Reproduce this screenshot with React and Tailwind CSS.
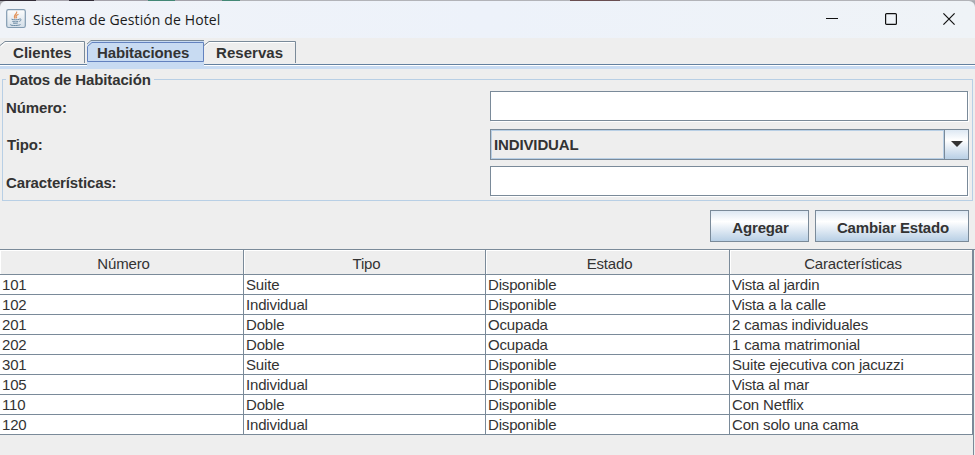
const rows = [
  ['101', 'Suite', 'Disponible', 'Vista al jardin'],
  ['102', 'Individual', 'Disponible', 'Vista a la calle'],
  ['201', 'Doble', 'Ocupada', '2 camas individuales'],
  ['202', 'Doble', 'Ocupada', '1 cama matrimonial'],
  ['301', 'Suite', 'Disponible', 'Suite ejecutiva con jacuzzi'],
  ['105', 'Individual', 'Disponible', 'Vista al mar'],
  ['110', 'Doble', 'Disponible', 'Con Netflix'],
  ['120', 'Individual', 'Disponible', 'Con solo una cama'],
];

function JavaIcon() {
  return (
    <svg width="20" height="20" viewBox="0 0 20 20" className="mb-px block">
      <defs>
        <linearGradient id="tile" x1="0" y1="0" x2="0" y2="1">
          <stop offset="0" stopColor="#fdfdfd" />
          <stop offset="1" stopColor="#d3dee8" />
        </linearGradient>
      </defs>
      <rect x="0.7" y="0.7" width="18.6" height="17.8" rx="1.8" fill="url(#tile)" stroke="#829bb1" strokeWidth="1.2" />
      <path d="M10.600 2.500C12 5 6.200 6 9.200 9.600M12.500 5.200C9.200 6.600 10 7.800 10.700 9.200" fill="none" stroke="#e2935a" strokeWidth="1.2" />
      <path d="M5.500 10.200c2 .8 6 .8 8 0M6.300 12.300c2 .7 4.600.7 6 0M7 14c1.400.5 3.300.5 4.800 0M13.500 10c2.300-.4 2 1.700-.2 2.400M4.500 15.300c-1.500 1.600 8.500 1.600 10 .2" fill="none" stroke="#6c8ba5" strokeWidth="1" />
    </svg>
  );
}

function TitleBar() {
  return (
    <header className="h-[38px] shrink-0 bg-[#a9abb1]">
      <div className="h-px bg-[linear-gradient(90deg,#332d38_0_36px,#a5a3ab_36px_69px,#332d38_69px_94px,#a5a3ab_94px_148px,#438775_148px_175px,#a5a3ab_175px_222px,#438775_222px_240px,#b2b3b8_240px_570px,#694d50_570px_620px,#b2b3b8_620px)]" />
      <div className="flex h-[37px] items-center rounded-t-[6px] bg-[linear-gradient(90deg,#f0f3f8,#edf2fa_50%,#eff3f7)] pl-1.5">
        <JavaIcon />
        <h1 className="mb-px ml-[7px] font-['Open_Sans',sans-serif] text-[14px] tracking-[0.12px] text-[#1b1b1b]">Sistema de Gestión de Hotel</h1>
        <div className="mb-px ml-auto flex w-[149px] justify-between pr-[20px]">
          <svg width="12" height="12" className="block"><path d="M0 5.5h12" stroke="#111" /></svg>
          <svg width="12" height="12" className="block"><rect x=".6" y=".6" width="10.8" height="10.8" rx="1" fill="none" stroke="#111" strokeWidth="1.2" /></svg>
          <svg width="12" height="12" className="block"><path d="M.4.4l11.2 11.2M11.6.4L.4 11.6" stroke="#111" strokeWidth="1.2" /></svg>
        </div>
      </div>
    </header>
  );
}

function Tabs() {
  return (
    <nav className="flex h-[31px] shrink-0 bg-[linear-gradient(180deg,#eee_0_26px,#63809f_26px_27px,#fff_27px_28px,#c8dbf2_28px)] font-bold">
      <div className="relative h-full w-[87px] pl-[13px] pt-[6px] leading-[18px]">
        <svg width="87" height="31" className="absolute left-0 top-0"><path d="M0 7.500L5 3.500H84.500V25" fill="none" stroke="#7a8a99" /><path d="M1 8.500L5.500 4.500H83.500" fill="none" stroke="#fff" /></svg>
        <span className="relative tracking-[0.05px]">Clientes</span>
      </div>
      <div className="relative h-full w-[117px] pl-[10px] pt-[6px] leading-[18px]">
        <svg width="118" height="31" className="absolute left-0 top-0">
          <path d="M0 31V7L4 3H117V31Z" fill="#c8dbf2" />
          <path d="M-.5 6.500L4 2.500H117" fill="none" stroke="#7a8a99" />
          <path d="M.5 23.500V8.500L5 4.500H116.500V23.500Z" fill="#c8dbf2" stroke="#6382bf" />
        </svg>
        <span className="relative tracking-[-0.1px]">Habitaciones</span>
      </div>
      <div className="relative h-full w-[92px] pl-[12px] pt-[6px] leading-[18px]">
        <svg width="92" height="31" className="absolute left-0 top-0"><path d="M0 7.500L5 3.500H91.500V25" fill="none" stroke="#7a8a99" /><path d="M1 8.500L5.500 4.500H90.500" fill="none" stroke="#fff" /></svg>
        <span className="relative tracking-[0.05px]">Reservas</span>
      </div>
    </nav>
  );
}

const field = 'block h-[30px] w-full border border-[#7a8a99] bg-white shadow-[1px_1px_0_#fff] outline-none';

function RoomForm() {
  return (
    <fieldset className="mx-[2px] mt-[2px] h-[130px] shrink-0 border border-[#b8cfe5] px-[3px]">
      <legend className="h-[17px] px-[3px] font-bold leading-[18px] tracking-[-0.13px]">Datos de Habitación</legend>
      <div className="grid grid-cols-[484px_478px] pt-px font-bold leading-[30px] tracking-[-0.13px]">
        <label htmlFor="numero" className="h-[38px] pt-[4px]">Número:</label>
        <div className="pt-[2px]"><input id="numero" className={field} /></div>
        <label className="h-[37px] pl-px pt-[3px]">Tipo:</label>
        <div className="pt-[2px]">
          <div className="flex h-[31px] w-[479px] border border-[#7a8a99]">
            <div className="flex-1 border border-[#b8cfe5] pl-[2px] leading-[27px]">INDIVIDUAL</div>
            <div className="flex w-[24px] items-center justify-center border-l border-[#7a8a99] bg-[linear-gradient(180deg,#dde8f3,#fff_35%,#b8cfe5)]">
              <svg width="12" height="6" className="mb-px"><path d="M0 0h12L6 6z" fill="#333" /></svg>
            </div>
          </div>
        </div>
        <label htmlFor="carac" className="pt-[4px]">Características:</label>
        <div className="pt-[2px]"><input id="carac" className={field} /></div>
      </div>
    </fieldset>
  );
}

const button = 'h-[32px] border border-[#7a8a99] bg-[linear-gradient(180deg,#dde8f3,#fff_35%,#b8cfe5)] pt-[5px] pl-[2px] text-center font-bold tracking-[-0.15px]';

function RoomTable() {
  return (
    <div className="flex-1 border-t border-[#7a8a99]">
      <div className="h-full w-[974px] border-r border-[#7a8a99]">
        <table className="w-[973px] table-fixed border-separate border-spacing-0 tracking-[-0.16px]">
          <colgroup><col className="w-[244px]" /><col className="w-[242px]" /><col className="w-[244px]" /><col className="w-[243px]" /></colgroup>
          <thead>
            <tr className="h-[25px]">
              {['Número', 'Tipo', 'Estado', 'Características'].map((h) => (
                <th key={h} className="border-b border-r border-[#7a8a99] p-0 pl-[4px] pt-[3px] font-normal leading-[20px] shadow-[inset_1px_1px_0_#fff]">{h}</th>
              ))}
            </tr>
          </thead>
          <tbody className="bg-white">
            {rows.map((r) => (
              <tr key={r[0]} className="h-[20px]">
                {r.map((c, i) => (
                  <td key={i} className="border-b border-r border-[#7a8a99] p-0 pl-[2px] leading-[19px]">{c}</td>
                ))}
              </tr>
            ))}
          </tbody>
        </table>
      </div>
    </div>
  );
}

export default function App() {
  return (
    <main className="flex h-[455px] w-[975px] flex-col overflow-hidden bg-[#eeeeee] font-['Liberation_Sans',Arial,sans-serif] text-[15px] text-[#333333]">
      <TitleBar />
      <Tabs />
      <RoomForm />
      <div className="flex h-[48px] shrink-0 justify-end gap-[6px] pr-[6px] pt-[9px]">
        <button className={`w-[99px] ${button}`}>Agregar</button>
        <button className={`w-[154px] ${button}`}>Cambiar Estado</button>
      </div>
      <RoomTable />
    </main>
  );
}
